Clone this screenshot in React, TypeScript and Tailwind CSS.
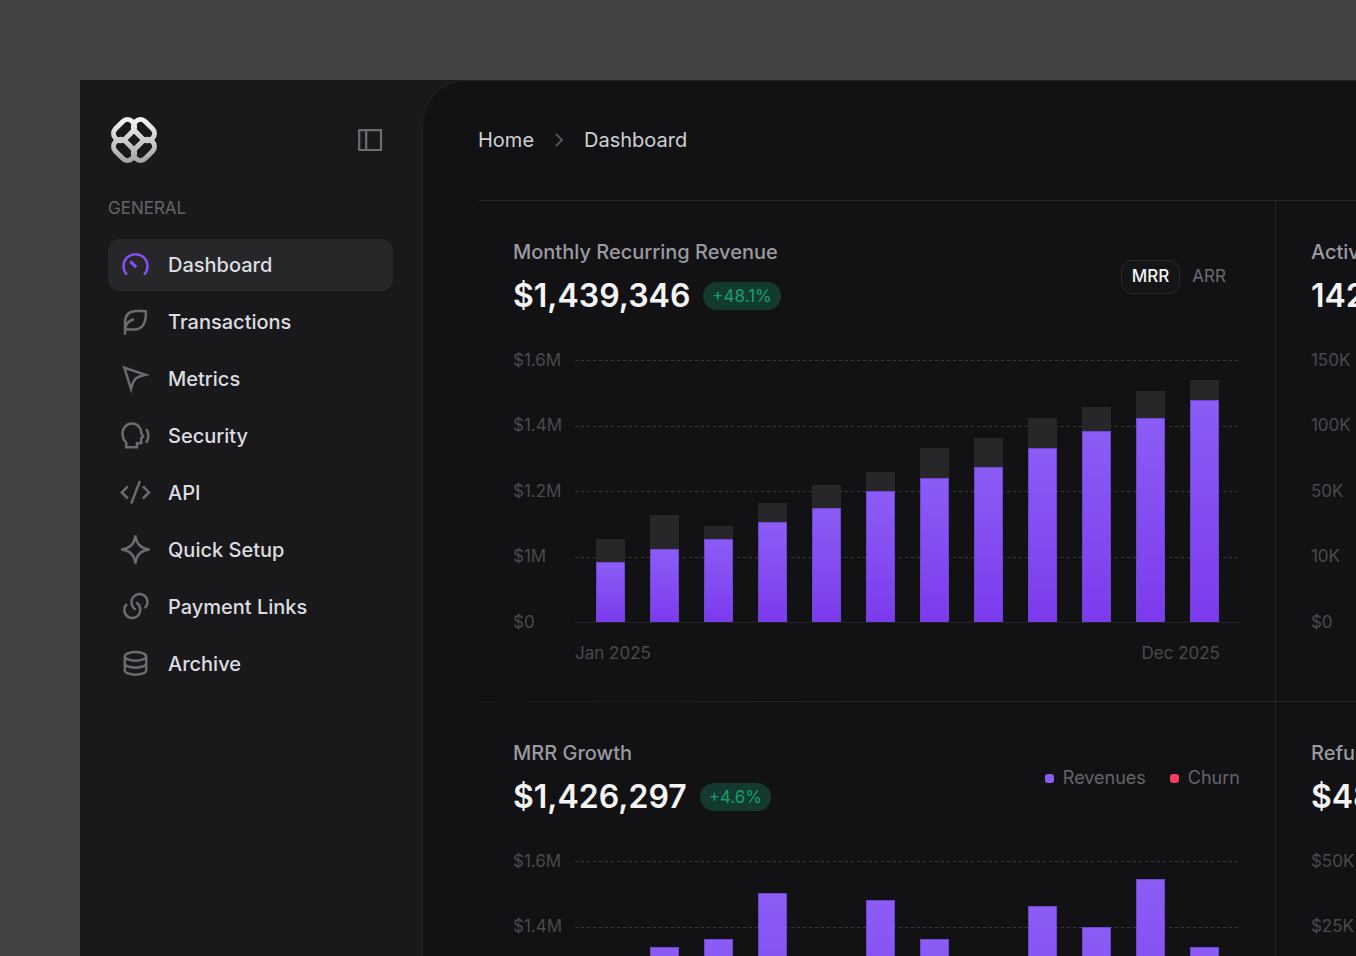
import { useState, type ReactNode } from "react";

const Icon = ({ children, className = "text-[#6c6b72]" }: { children: ReactNode; className?: string }) => (
  <svg
    viewBox="0 0 32 32"
    className={`size-8 shrink-0 ${className}`}
    fill="none"
    stroke="currentColor"
    strokeWidth="2.5"
    strokeMiterlimit="10"
    aria-hidden="true"
  >
    {children}
  </svg>
);

const Logo = () => (
  <svg viewBox="-24 -24 48 48" className="size-12" fill="none" aria-label="Logo" role="img">
    <defs>
      <linearGradient id="logo" gradientUnits="userSpaceOnUse" x1="0" y1="-23" x2="0" y2="23">
        <stop offset="0" stopColor="#f8f8f9" />
        <stop offset="1" stopColor="#a3a3a6" />
      </linearGradient>
      <mask id="rings" maskUnits="userSpaceOnUse" x="-24" y="-24" width="48" height="48">
        {[45, 135, 225, 315].map((a) => (
          <rect
            key={a}
            x="-11.8"
            y="-21"
            width="23.6"
            height="14"
            rx="6.6"
            stroke="#fff"
            strokeWidth="5"
            transform={`rotate(${a})`}
          />
        ))}
      </mask>
    </defs>
    <rect x="-24" y="-24" width="48" height="48" fill="url(#logo)" mask="url(#rings)" />
  </svg>
);

const navItems: { label: string; icon: ReactNode }[] = [
  {
    label: "Dashboard",
    icon: (
      <>
        <path d="M8 25.7A12 12 0 1 1 25 25.7" />
        <path d="M11.2 12.4L17.2 18.2" strokeWidth="3.2" />
      </>
    ),
  },
  {
    label: "Transactions",
    icon: (
      <path d="M6 28.7V16.5C6 8.5 11 5.4 16.5 5C21 4.8 23.5 5.4 26.8 5.2C27.5 16 24 23.6 15 23.6H6.3M6.2 23.4C6.5 18.5 9.5 14.5 15 13.2" />
    ),
  },
  { label: "Metrics", icon: <path d="M5.4 4.8L26.6 11.8C21 13.1 18 14.5 16 16.2C14.2 18.6 13.2 21.3 12 26Z" /> },
  {
    label: "Security",
    icon: (
      <>
        <path d="M7.2 27.3V22.6C4.6 20.3 3.5 16.8 3.5 13.6C3.5 8 7.6 3.6 13 3.6C18.5 3.6 22 7.6 22.2 12.8L24.2 16.4L22.2 18V23.2H18V27.3Z" />
        <path d="M27 9C30.2 12.6 30.2 18.8 27 22.8" />
      </>
    ),
  },
  { label: "API", icon: <path d="M8.8 9.3L2.8 15.4L8.8 21.5M20.9 4L12.2 26.6M24 9.3L30 15.4L24 21.5" /> },
  {
    label: "Quick Setup",
    icon: (
      <path
        strokeMiterlimit="3"
        d="M16.4 1.4C17.2 9.8 22 14.6 30.6 15.5C22 16.4 17.2 21.2 16.4 29.6C15.6 21.2 10.8 16.4 2.2 15.5C10.8 14.6 15.6 9.8 16.4 1.4Z"
      />
    ),
  },
  {
    label: "Payment Links",
    icon: (
      <path d="M25.8 17A8 8 0 1 0 12.9 13.5Q13.6 16.8 16.6 18.6M8 13A8 8 0 1 0 20.9 16.5Q20.2 13.2 17.2 11.4" />
    ),
  },
  {
    label: "Archive",
    icon: (
      <>
        <ellipse cx="16.5" cy="8.4" rx="10.7" ry="4.3" />
        <path d="M5.8 8.4V22.4C5.8 24.8 10.6 26.7 16.5 26.7S27.2 24.8 27.2 22.4V8.4M5.8 15.4C5.8 17.8 10.6 19.7 16.5 19.7S27.2 17.8 27.2 15.4" />
      </>
    ),
  },
];

function Sidebar() {
  return (
    <aside className="w-[342px] shrink-0 pr-[29px] pl-7">
      <div className="flex h-[120px] items-center justify-between pr-[7px] pl-[2px]">
        <Logo />
        <button type="button" aria-label="Toggle sidebar">
          <Icon>
            <path d="M5.2 6.2H27V26H5.2ZM12.2 6.2V26" strokeWidth="2.2" />
          </Icon>
        </button>
      </div>
      <h2 className="text-[17px] leading-4 text-[#65646b]">GENERAL</h2>
      <nav className="mt-[23px] flex flex-col gap-[5px]">
        {navItems.map(({ label, icon }, i) => (
          <a
            key={label}
            href="#"
            className={`flex h-[52px] items-center gap-[17px] rounded-xl pl-[11px] text-xl font-medium text-[#dddde0] ${
              i === 0 ? "bg-[#27272a]" : ""
            }`}
          >
            <Icon className={i === 0 ? "text-[#8250f5]" : "text-[#6c6b72]"}>{icon}</Icon>
            {label}
          </a>
        ))}
      </nav>
    </aside>
  );
}

type Bar = { value: number; total?: number };

function Chart({ ticks, bars, range }: { ticks: string[]; bars: Bar[]; range?: [string, string] }) {
  return (
    <div className="mt-[42px] flex">
      <div className="flex h-[263px] w-[62px] shrink-0 flex-col justify-between text-[17px] text-[#4a494f]">
        {ticks.map((t) => (
          <span key={t} className="flex h-px items-center">
            {t}
          </span>
        ))}
      </div>
      <div className="min-w-0 flex-1">
        <div className="relative h-[263px]">
          <div className="absolute inset-0 flex flex-col justify-between">
            {ticks.map((t, i) => (
              <div
                key={t}
                className={`h-px ${
                  i === ticks.length - 1
                    ? "bg-[#232326]"
                    : "bg-[repeating-linear-gradient(90deg,#35353a_0_3px,transparent_3px_6px)]"
                }`}
              />
            ))}
          </div>
          <div className="relative flex h-[262px] items-end justify-between px-[21px]">
            {bars.map(({ value, total = value }, i) => (
              <div key={i} className="flex w-[29px] flex-col bg-[#27272a]" style={{ height: `${(total / 262) * 100}%` }}>
                <div
                  className="mt-auto border-x border-t border-[#6f46cf] bg-linear-to-b from-[#8b5cf6] to-[#7c3aed]"
                  style={{ height: `${(value / total) * 100}%` }}
                />
              </div>
            ))}
          </div>
        </div>
        {range && (
          <div className="mt-[18px] flex justify-between pr-5 text-[17px] leading-6 text-[#4a494f]">
            <span>{range[0]}</span>
            <span>{range[1]}</span>
          </div>
        )}
      </div>
    </div>
  );
}

type CardProps = {
  title: string;
  value: string;
  change?: string;
  ticks: string[];
  bars?: Bar[];
  range?: [string, string];
  children?: ReactNode;
};

function Card({ title, value, change, ticks, bars = [], range, children }: CardProps) {
  return (
    <section className="h-full min-w-[640px] px-[35px] pt-[35px] pb-9">
      <div className="flex items-center justify-between whitespace-nowrap">
        <div>
          <h3 className="text-xl leading-8 font-medium text-[#9b9aa1]">{title}</h3>
          <div className="mt-[6px] flex items-center gap-[13px]">
            <span className="text-[32px] leading-[44px] font-semibold text-[#f4f4f5]">{value}</span>
            {change && (
              <span className="rounded-full bg-[#14392e] px-[9px] text-[17px] leading-7 text-[#159f6e]">{change}</span>
            )}
          </div>
        </div>
        {children}
      </div>
      <Chart ticks={ticks} bars={bars} range={range} />
    </section>
  );
}

function PeriodToggle() {
  const [active, setActive] = useState("MRR");
  return (
    <div className="mr-[3px] flex gap-px">
      {["MRR", "ARR"].map((p) => (
        <button
          key={p}
          type="button"
          aria-pressed={active === p}
          onClick={() => setActive(p)}
          className={`h-[34px] rounded-[11px] border px-[10px] text-[17px] ${
            active === p
              ? "border-[#2a2a2d] bg-[#151517] font-medium text-[#f4f4f5]"
              : "border-transparent text-[#6c6b72]"
          }`}
        >
          {p}
        </button>
      ))}
    </div>
  );
}

const recurring: Bar[] = [
  { value: 60, total: 83 },
  { value: 73, total: 107 },
  { value: 83, total: 96 },
  { value: 100, total: 119 },
  { value: 114, total: 137 },
  { value: 131, total: 150 },
  { value: 144, total: 174 },
  { value: 155, total: 184 },
  { value: 174, total: 204 },
  { value: 191, total: 215 },
  { value: 204, total: 231 },
  { value: 222, total: 242 },
];

const growth: Bar[] = [140, 176, 184, 230, 150, 223, 184, 160, 217, 196, 244, 176].map((value) => ({ value }));

const usdTicks = ["$1.6M", "$1.4M", "$1.2M", "$1M", "$0"];

export default function App() {
  return (
    <div className="h-screen overflow-hidden bg-[#434345] pt-20 pl-20 font-['Inter',sans-serif] antialiased">
      <div className="flex h-full bg-[#19191b]">
        <Sidebar />
        <main className="min-w-0 flex-1 overflow-hidden rounded-tl-[44px] border-t border-l border-[#232326] bg-[#121214] pl-[55px]">
          <nav
            aria-label="Breadcrumb"
            className="flex h-[119px] items-center gap-[17px] pb-[2px] text-xl text-[#d0cfd4]"
          >
            <a href="#">Home</a>
            <svg viewBox="0 0 16 16" className="size-4" fill="none" stroke="#55545b" strokeWidth="2" aria-hidden="true">
              <path d="M5 2L11 8L5 14" />
            </svg>
            <span>Dashboard</span>
          </nav>
          <div className="grid grid-cols-[59fr_6fr] border-t border-[#252528]">
            <div className="min-w-0 overflow-hidden">
              <Card
                title="Monthly Recurring Revenue"
                value="$1,439,346"
                change="+48.1%"
                ticks={usdTicks}
                bars={recurring}
                range={["Jan 2025", "Dec 2025"]}
              >
                <PeriodToggle />
              </Card>
            </div>
            <div className="min-w-0 overflow-hidden border-l border-[#252528]">
              <Card title="Active Users" value="142,869" ticks={["150K", "100K", "50K", "10K", "$0"]} />
            </div>
            <div className="col-span-2 h-px bg-linear-to-r from-[#17171a] via-[#252528] to-[#252528]" />
            <div className="min-w-0 overflow-hidden">
              <Card title="MRR Growth" value="$1,426,297" change="+4.6%" ticks={usdTicks} bars={growth}>
                <ul className="flex gap-6 text-lg text-[#66656c]">
                  <li className="flex items-center gap-[9px]">
                    <span className="size-[9px] rounded-[3px] bg-[#8b5cf6]" />
                    Revenues
                  </li>
                  <li className="flex items-center gap-[9px]">
                    <span className="size-[9px] rounded-[3px] bg-[#f43f5e]" />
                    Churn
                  </li>
                </ul>
              </Card>
            </div>
            <div className="min-w-0 overflow-hidden border-l border-[#252528]">
              <Card title="Refunds" value="$48,210" ticks={["$50K", "$25K", "$10K", "$5K", "$0"]} />
            </div>
          </div>
        </main>
      </div>
    </div>
  );
}
